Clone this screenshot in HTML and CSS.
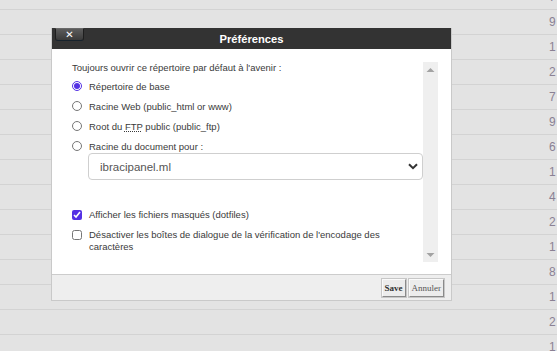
FILE: index.html
```html
<!DOCTYPE html>
<html lang="fr">
<head>
<meta charset="utf-8">
<title>Préférences</title>
<link rel="stylesheet" href="styles.css">
</head>
<body>
<div class="rows">
  <div class="row"><span class="num">7</span></div>
  <div class="row"><span class="num">9</span></div>
  <div class="row"><span class="num">1</span></div>
  <div class="row"><span class="num">2</span></div>
  <div class="row"><span class="num">7</span></div>
  <div class="row"><span class="num">9</span></div>
  <div class="row"><span class="num">6</span></div>
  <div class="row"><span class="num">1</span></div>
  <div class="row"><span class="num">4</span></div>
  <div class="row"><span class="num">2</span></div>
  <div class="row"><span class="num">1</span></div>
  <div class="row"><span class="num">8</span></div>
  <div class="row"><span class="num">1</span></div>
  <div class="row"><span class="num">2</span></div>
  <div class="row"><span class="num">1</span></div>
</div>

<div class="dialog">
  <div class="titlebar">
    <button class="close" type="button">✕</button>
    <span class="title">Préférences</span>
  </div>
  <div class="body">
    <div class="scroll">
      <div class="content">
        <p class="lead">Toujours ouvrir ce répertoire par défaut à l'avenir :</p>
        <label class="opt"><input type="radio" name="dir" checked><span>Répertoire de base</span></label>
        <label class="opt"><input type="radio" name="dir"><span>Racine Web (public_html or www)</span></label>
        <label class="opt"><input type="radio" name="dir"><span>Root du <abbr title="File Transfer Protocol">FTP</abbr> public (public_ftp)</span></label>
        <label class="opt"><input type="radio" name="dir"><span>Racine du document pour :</span></label>
        <div class="selectwrap">
          <select class="select"><option>ibracipanel.ml</option></select>
          <svg class="chev" width="10" height="7" viewBox="0 0 10 7"><path d="M1 1.2 L5 5.2 L9 1.2" fill="none" stroke="#333" stroke-width="2"/></svg>
        </div>
        <label class="chk first"><input type="checkbox" checked><span>Afficher les fichiers masqués (dotfiles)</span></label>
        <label class="chk"><input type="checkbox"><span>Désactiver les boîtes de dialogue de la vérification de l'encodage des caractères</span></label>
      </div>
      <div class="sbar">
        <svg width="15" height="15" viewBox="0 0 15 15"><path d="M3.5 10 L7.5 6 L11.5 10 Z" fill="#a3a3a3"/></svg>
        <svg width="15" height="15" viewBox="0 0 15 15"><path d="M3.5 6 L7.5 10 L11.5 6 Z" fill="#a3a3a3"/></svg>
      </div>
    </div>
  </div>
  <div class="footer">
    <button class="btn save" type="button">Save</button>
    <button class="btn" type="button">Annuler</button>
  </div>
</div>
</body>
</html>
```

FILE: styles.css
```css
html, body {
  margin: 0;
  padding: 0;
  overflow: hidden;
  width: 557px;
  height: 351px;
}
body {
  background: #e3e3e3;
  font-family: "Liberation Sans", Arial, sans-serif;
  position: relative;
}
.rows {
  margin-top: -15px;
}
.row {
  height: 24px;
  border-bottom: 1px solid #d3d3d3;
  display: flex;
  align-items: center;
  white-space: nowrap;
}
.num {
  margin-left: 549px;
  font-size: 12px;
  color: #8a8194;
}

.dialog {
  position: absolute;
  left: 51px;
  top: 28px;
  width: 399px;
  border: 1px solid #c9c9c9;
  border-top: 0;
  background: #fff;
}
.titlebar {
  height: 21px;
  background: #333333;
  display: flex;
  align-items: center;
  justify-content: center;
  position: relative;
}
.title {
  color: #fff;
  font-weight: bold;
  font-size: 11.2px;
}
.close {
  position: absolute;
  left: 3px;
  top: 0;
  width: 29px;
  height: 13px;
  padding: 0;
  border: 1px solid #1e1e1e;
  border-top: 1px solid #6a6a6a;
  border-bottom-color: #16222c;
  border-radius: 0 0 3px 3px;
  background: linear-gradient(#5c5c5c, #3a3a3a);
  color: #fff;
  font-size: 10px;
  font-weight: bold;
  line-height: 11px;
  font-family: "DejaVu Sans", sans-serif;
}
.body {
  padding: 13px 13px 12px 10px;
  background: #fff;
}
.scroll {
  height: 200px;
  display: flex;
}
.content {
  flex: 1;
  padding-left: 10px;
  color: #3a3a3a;
  font-size: 9.5px;
}
.sbar {
  width: 15px;
  flex: none;
  background: #efefef;
  display: flex;
  flex-direction: column;
  justify-content: space-between;
}
.sbar svg {
  display: block;
}
.lead {
  margin: 0 0 5px;
  line-height: 12px;
}
.opt {
  display: flex;
  align-items: center;
  height: 14px;
  margin-bottom: 6px;
}
.opt:nth-of-type(4) {
  margin-bottom: 0;
}
.opt input, .chk input {
  margin: 0 7px 0 0;
  width: 10px;
  height: 10px;
  accent-color: #5431e4;
  flex: none;
}
abbr {
  text-decoration: underline dotted;
}
.selectwrap {
  position: relative;
  margin-left: 16px;
}
.select {
  appearance: none;
  -webkit-appearance: none;
  width: 100%;
  height: 27px;
  border: 1px solid #cfcfcf;
  border-radius: 4px;
  background: #fff;
  padding: 0 11px;
  font-family: "Liberation Sans", Arial, sans-serif;
  font-size: 11.5px;
  color: #555;
  display: block;
}
.chev {
  position: absolute;
  right: 5px;
  top: 10px;
}
.chk {
  display: flex;
  align-items: flex-start;
  line-height: 12px;
  margin-top: 8px;
}
.chk.first {
  margin-top: 29px;
}
.chk input {
  margin-top: 1px;
}
.footer {
  height: 26px;
  background: #eeeeee;
  border-top: 1px solid #cccccc;
  display: flex;
  justify-content: flex-end;
  align-items: center;
  gap: 3px;
  padding-right: 7px;
  box-sizing: border-box;
}
.btn {
  font-family: "Liberation Serif", "Times New Roman", serif;
  font-size: 9px;
  height: 18px;
  padding: 0 2px;
  background: #ececec;
  color: #555;
  border: 1px solid;
  border-color: #fafafa #8a8a8a #8a8a8a #fafafa;
  box-shadow: 0 0 0 1px #c7c7c7;
}
.save {
  font-weight: bold;
  color: #333;
}
```
